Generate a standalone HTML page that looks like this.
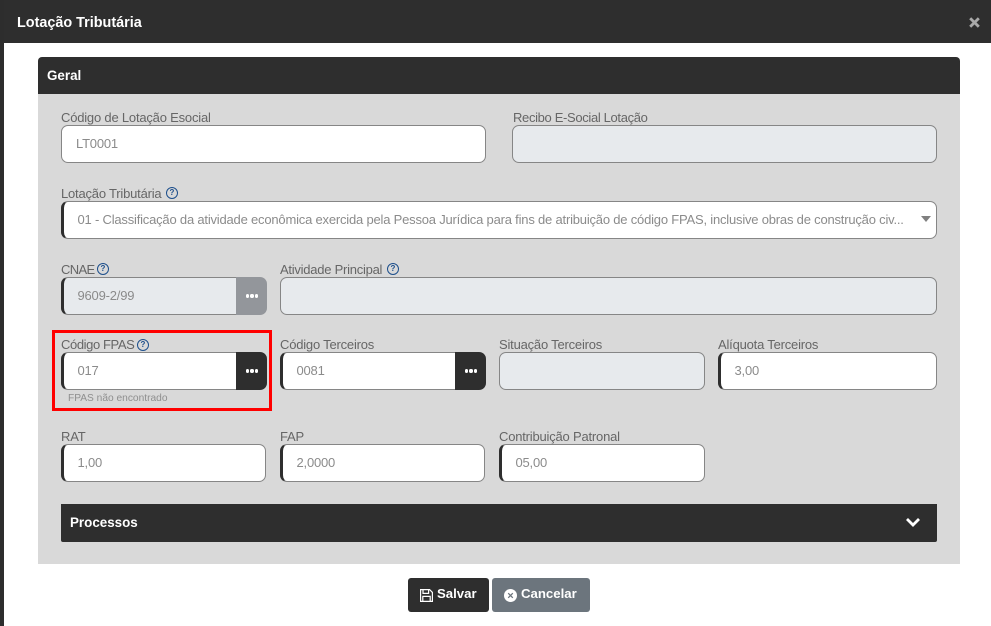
<!DOCTYPE html>
<html lang="pt"><head><meta charset="utf-8"><title>Lotação Tributária</title>
<style>
*{box-sizing:border-box}
html,body{margin:0;padding:0}
body{width:991px;height:626px;overflow:hidden;position:relative;background:#fff;font-family:"Liberation Sans",Arial,sans-serif}
.a{position:absolute}
.lbl{position:absolute;font-size:13px;line-height:15px;color:#666;white-space:nowrap;letter-spacing:-.2px}
.in{position:absolute;height:38px;background:#fff;border:1px solid #868686;border-radius:7px;font-size:13px;letter-spacing:-.2px;line-height:36px;color:#8b8b8b;padding-left:14px;white-space:nowrap;overflow:hidden}
.th{border-left:3px solid #2e2e2e;padding-left:13.5px}
.dis{background:#e7eaed}
.btn{position:absolute;width:31px;height:38px;background:#2e2e2e;border-radius:0 7px 7px 0}
.btn i{position:absolute;top:17.3px;width:3.4px;height:3.4px;border-radius:50%;background:#fff}
.btn i:nth-child(1){left:10px}.btn i:nth-child(2){left:14.3px}.btn i:nth-child(3){left:18.6px}
.q{position:absolute;width:12px;height:12px;border:1.3px solid #1d4f8c;border-radius:50%;font-size:8px;line-height:10px;text-align:center;color:#1d4f8c;font-weight:bold}
</style></head><body>
<div class="a" style="left:0;top:0;width:4px;height:626px;background:#2d2d2d"></div>
<div class="a" style="left:4px;top:0;width:987px;height:43px;background:#2e2e2e"></div>
<div class="a" style="left:17px;top:14px;font-size:14.4px;line-height:18px;font-weight:bold;color:#fff">Lotação Tributária</div>
<svg class="a" style="left:968px;top:16px" width="13" height="13" viewBox="0 0 13 13"><path d="M2.2 2.2L10.8 10.8M10.8 2.2L2.2 10.8" stroke="#a9a9a9" stroke-width="2.8"/></svg>

<div class="a" style="left:38px;top:57px;width:922px;height:37px;background:#2e2e2e;border-radius:4px 4px 0 0"></div>
<div class="a" style="left:47px;top:68px;font-size:13.4px;line-height:16px;font-weight:bold;color:#fff">Geral</div>
<div class="a" style="left:38px;top:94px;width:922px;height:470px;background:#d9d9d9"></div>

<div class="lbl" style="left:61px;top:110px">Código de Lotação Esocial</div>
<div class="in" style="left:61px;top:125px;width:425px">LT0001</div>
<div class="lbl" style="left:513px;top:110px;letter-spacing:-.34px">Recibo E-Social Lotação</div>
<div class="in dis" style="left:512px;top:125px;width:425px"></div>

<div class="lbl" style="left:61px;top:186px">Lotação Tributária</div><span class="q" style="left:166px;top:187px">?</span>
<div class="in th" style="left:61px;top:201px;width:876px">01 - Classificação da atividade econômica exercida pela Pessoa Jurídica para fins de atribuição de código FPAS, inclusive obras de construção civ...</div>
<div class="a" style="left:921px;top:216px;width:0;height:0;border-left:5.5px solid transparent;border-right:5.5px solid transparent;border-top:6px solid #808080"></div>

<div class="lbl" style="left:61px;top:262px;letter-spacing:-.65px">CNAE</div><span class="q" style="left:97px;top:263px">?</span>
<div class="in th dis" style="left:61px;top:277px;width:176px;border-radius:7px 0 0 7px">9609-2/99</div>
<div class="btn" style="left:236px;top:277px;background:#93969b"><i></i><i></i><i></i></div>
<div class="lbl" style="left:280px;top:262px;letter-spacing:-.25px">Atividade Principal</div><span class="q" style="left:387px;top:263px">?</span>
<div class="in dis" style="left:280px;top:277px;width:657px"></div>

<div class="a" style="left:52px;top:330px;width:220px;height:81px;border:3px solid #f00"></div>
<div class="lbl" style="left:61px;top:337px;letter-spacing:-.4px">Código FPAS</div><span class="q" style="left:137px;top:339px">?</span>
<div class="in th" style="left:61px;top:352px;width:176px;border-radius:7px 0 0 7px">017</div>
<div class="btn" style="left:236px;top:352px"><i></i><i></i><i></i></div>
<div class="a" style="left:68px;top:392px;font-size:10.2px;line-height:13px;color:#8f8f8f">FPAS não encontrado</div>

<div class="lbl" style="left:280px;top:337px">Código Terceiros</div>
<div class="in th" style="left:280px;top:352px;width:176px;border-radius:7px 0 0 7px">0081</div>
<div class="btn" style="left:455px;top:352px"><i></i><i></i><i></i></div>
<div class="lbl" style="left:499px;top:337px">Situação Terceiros</div>
<div class="in dis" style="left:499px;top:352px;width:206px"></div>
<div class="lbl" style="left:718px;top:337px">Alíquota Terceiros</div>
<div class="in th" style="left:718px;top:352px;width:219px">3,00</div>

<div class="lbl" style="left:61px;top:429px">RAT</div>
<div class="in th" style="left:61px;top:444px;width:205px">1,00</div>
<div class="lbl" style="left:280px;top:429px">FAP</div>
<div class="in th" style="left:280px;top:444px;width:205px">2,0000</div>
<div class="lbl" style="left:499px;top:429px">Contribuição Patronal</div>
<div class="in th" style="left:499px;top:444px;width:206px">05,00</div>

<div class="a" style="left:61px;top:504px;width:876px;height:38px;background:#2e2e2e;border-radius:0 0 2px 2px"></div>
<div class="a" style="left:70px;top:515px;font-size:13.4px;line-height:16px;font-weight:bold;color:#fff">Processos</div>
<svg class="a" style="left:905px;top:516px" width="16" height="12" viewBox="0 0 16 12"><path d="M2 3L8 9L14 3" fill="none" stroke="#fff" stroke-width="2.8"/></svg>

<div class="a" style="left:408px;top:578px;width:81px;height:34px;background:#2e2e2e;border-radius:3px"></div>
<svg class="a" style="left:420px;top:589px" width="13" height="13" viewBox="0 0 13 13"><path d="M.6.6H9.6L12.4 3.4V12.4H.6ZM3 .6V4.4H8.6V.6M2.8 12.4V7.4H10.2V12.4" fill="none" stroke="#fff" stroke-width="1.2"/></svg>
<div class="a" style="left:437px;top:586px;font-size:13.2px;line-height:16px;font-weight:bold;color:#fff">Salvar</div>

<div class="a" style="left:492px;top:578px;width:98px;height:34px;background:#6c757d;border-radius:3px"></div>
<svg class="a" style="left:504px;top:589px" width="13" height="13" viewBox="0 0 13 13"><circle cx="6.5" cy="6.5" r="6.5" fill="#fff"/><path d="M4.2 4.2L8.8 8.8M8.8 4.2L4.2 8.8" stroke="#6c757d" stroke-width="1.3"/></svg>
<div class="a" style="left:521px;top:586px;font-size:13.2px;line-height:16px;font-weight:bold;color:#fff">Cancelar</div>
</body></html>
